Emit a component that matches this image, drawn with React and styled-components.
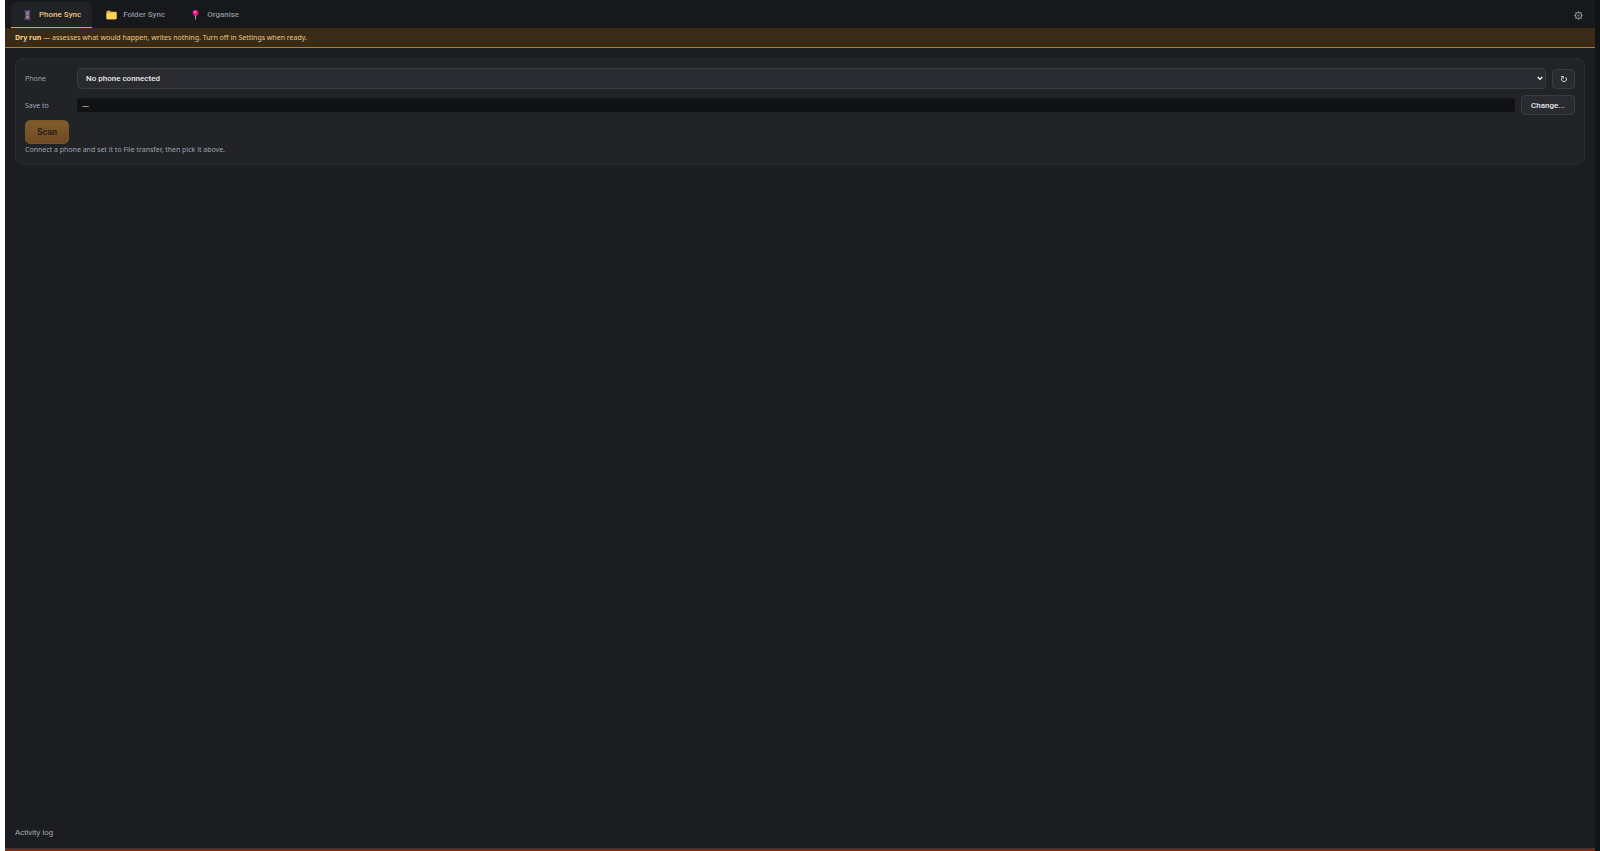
import React from 'react';
import styled, { createGlobalStyle } from 'styled-components';

const GlobalStyle = createGlobalStyle`
    * {
        box-sizing: border-box;
    }

    body {
        margin: 0;
        background: #111213;
        font-family: 'Noto Sans', sans-serif;
        font-size: 7px;
        color: #9ca5af;
    }

    button, select, input {
        font-family: Roboto, sans-serif;
        font-size: 8px;
    }
`;

const Page = styled.div`
    display: flex;
    flex-direction: column;
    min-height: 100vh;
    margin-right: 5px;
    border-left: 5px solid #ffffff;
    background: #1b1d20;
`;

const TabBar = styled.nav`
    display: flex;
    align-items: flex-end;
    gap: 3px;
    height: 28px;
    padding: 0 6px;
    background: #17181c;
`;

const Tab = styled.button`
    display: flex;
    align-items: center;
    gap: 6px;
    height: 26px;
    padding: 0 11px;
    border: 0;
    border-bottom: 1px solid ${({ $active }) => ($active ? '#e5a036' : 'transparent')};
    border-radius: 5px 5px 0 0;
    background: ${({ $active }) => ($active ? '#202226' : 'transparent')};
    color: ${({ $active }) => ($active ? '#f2c67f' : '#8d96a1')};
    font-weight: 500;
    cursor: pointer;
`;

const SettingsButton = styled.button`
    display: flex;
    align-items: center;
    justify-content: center;
    width: 22px;
    height: 26px;
    margin-left: auto;
    padding: 0;
    border: 0;
    background: transparent;
    color: #a5afba;
    cursor: pointer;
`;

const Banner = styled.div`
    height: 20px;
    padding: 0 10px;
    border-bottom: 1px solid #b27c26;
    background: #392b17;
    color: #efc681;
    line-height: 20px;

    strong {
        color: #fbd08b;
        font-weight: 700;
    }
`;

const Main = styled.main`
    flex: 1;
    padding: 10px;
`;

const Card = styled.section`
    height: 107px;
    padding: 9px;
    border: 1px solid #292b2f;
    border-radius: 8px;
    background: #212327;
`;

const Row = styled.div`
    display: flex;
    align-items: center;
    gap: 6px;
    height: ${({ $tall }) => ($tall ? '21px' : '20px')};
    margin-bottom: ${({ $tall }) => ($tall ? '6px' : '5px')};
`;

const Label = styled.label`
    width: 46px;
    color: #9ba4af;
`;

const SelectBox = styled.div`
    position: relative;
    flex: 1;
    height: 21px;

    svg {
        position: absolute;
        top: 8px;
        right: 3px;
        pointer-events: none;
    }
`;

const Select = styled.select`
    display: block;
    width: 100%;
    height: 100%;
    padding: 0 8px;
    border: 1px solid #3a3c43;
    border-radius: 4px;
    appearance: none;
    background: #2a2b31;
    color: #e9eaec;
    font-weight: 500;
`;

const PathField = styled.input`
    flex: 1;
    min-width: 0;
    height: 14px;
    padding: 0 5px;
    border: 0;
    border-radius: 3px;
    background: #111214;
    color: #d5d7da;
    font-family: 'Noto Sans', sans-serif;
    font-size: 7px;
`;

const Button = styled.button`
    display: flex;
    align-items: center;
    justify-content: center;
    width: ${({ $wide }) => ($wide ? '54px' : '23px')};
    height: 20px;
    padding: 0;
    border: 1px solid #3a3c43;
    border-radius: 4px;
    background: #2a2b31;
    color: #e6e7e9;
    font-weight: 500;
    cursor: pointer;
`;

const ScanButton = styled.button`
    display: block;
    width: 44px;
    height: 24px;
    padding: 0;
    border: 1px solid #765529;
    border-radius: 5px;
    background: linear-gradient(#805c2a, #704a23);
    color: #2a2018;
    font-size: 9px;
    font-weight: 700;
`;

const Hint = styled.p`
    margin: 0;
    color: #9ba4af;
    line-height: 12px;
`;

const ActivityLog = styled.footer`
    height: 27px;
    padding: 4px 10px;
    border-bottom: 1px solid #34363a;
    color: #a3a9b1;
    font-family: 'Liberation Sans', sans-serif;
    font-size: 8px;
    line-height: 14px;
`;

const BottomStrip = styled.div`
    height: 2px;
    background: #7b2a10;
`;

const PhoneIcon = () => (
    <svg width="11" height="10" viewBox="0 0 11 10" aria-hidden="true">
        <path d="M3 1h5v8H3z" fill="#4b4a7c" />
        <path d="M3.800 1.500h3.400v1.700L6.200 5l1 1.800v1.700H3.800V6.800L4.800 5l-1-1.800z" fill="#8b7285" />
        <path d="M4 2.500h3L5.500 4.500zM5.500 5.500L7 8H4z" fill="#c98450" />
        <path d="M2.500 1h6M2.500 9h6" stroke="#6660b5" strokeWidth="1.200" />
    </svg>
);

const FolderIcon = () => (
    <svg width="11" height="10" viewBox="0 0 11 10" aria-hidden="true">
        <path d="M.5 1.500q0-.7.700-.7H4l1 1h4.800q.7 0 .7.700V8.500q0 .7-.7.700H1.200q-.7 0-.7-.7z" fill="#e9b43e" />
        <path d="M.5 3.200h3.800l1-.8h5.200v6.100q0 .7-.7.700H1.200q-.7 0-.7-.7z" fill="#ffd35a" />
    </svg>
);

const PinIcon = () => (
    <svg width="11" height="10" viewBox="0 0 11 10" aria-hidden="true">
        <path d="M5.500 5v4.600" stroke="#a49bac" strokeWidth="1" />
        <circle cx="5.500" cy="2.900" r="2.800" fill="#ed168d" />
        <circle cx="4.900" cy="2" r=".9" fill="#ff9bd0" />
    </svg>
);

const GearIcon = () => (
    <svg width="9" height="9" viewBox="0 0 9 9" fill="none" stroke="currentColor" aria-hidden="true">
        <circle cx="4.500" cy="4.500" r="3.100" strokeWidth="1" />
        <circle cx="4.500" cy="4.500" r=".8" strokeWidth=".6" />
        <path d="M4.500 .4v1M4.500 7.600v1M.4 4.500h1M7.600 4.500h1M1.500 1.500l.7.700M6.800 6.800l.7.700M1.500 7.500l.7-.7M6.800 2.200l.7-.7" strokeWidth=".9" />
    </svg>
);

const ChevronIcon = () => (
    <svg width="6" height="5" viewBox="0 0 6 5" fill="none" aria-hidden="true">
        <path d="M.7 1L3 3.300 5.300 1" stroke="#f1f1f2" strokeWidth="1.400" />
    </svg>
);

const RefreshIcon = () => (
    <svg width="8" height="8" viewBox="0 0 8 8" fill="none" stroke="currentColor" aria-hidden="true">
        <path d="M5.600 2.200A2.500 2.500 0 1 1 2.400 2.200" strokeWidth=".9" />
        <path d="M1 1.500h2.300v2.200" strokeWidth=".9" />
    </svg>
);

const App = () => {
    return (
        <>
            <GlobalStyle />
            <Page>
                <TabBar>
                    <Tab $active><PhoneIcon />Phone Sync</Tab>
                    <Tab><FolderIcon />Folder Sync</Tab>
                    <Tab><PinIcon />Organise</Tab>
                    <SettingsButton aria-label="Settings"><GearIcon /></SettingsButton>
                </TabBar>
                <Banner>
                    <strong>Dry run</strong> — assesses what would happen, writes nothing. Turn off in Settings when ready.
                </Banner>
                <Main>
                    <Card>
                        <Row $tall>
                            <Label htmlFor="phone">Phone</Label>
                            <SelectBox>
                                <Select id="phone">
                                    <option>No phone connected</option>
                                </Select>
                                <ChevronIcon />
                            </SelectBox>
                            <Button aria-label="Refresh"><RefreshIcon /></Button>
                        </Row>
                        <Row>
                            <Label htmlFor="path">Save to</Label>
                            <PathField id="path" value="—" readOnly />
                            <Button $wide>Change...</Button>
                        </Row>
                        <ScanButton disabled>Scan</ScanButton>
                        <Hint>Connect a phone and set it to File transfer, then pick it above.</Hint>
                    </Card>
                </Main>
                <ActivityLog>Activity log</ActivityLog>
                <BottomStrip />
            </Page>
        </>
    );
};

export default App;
